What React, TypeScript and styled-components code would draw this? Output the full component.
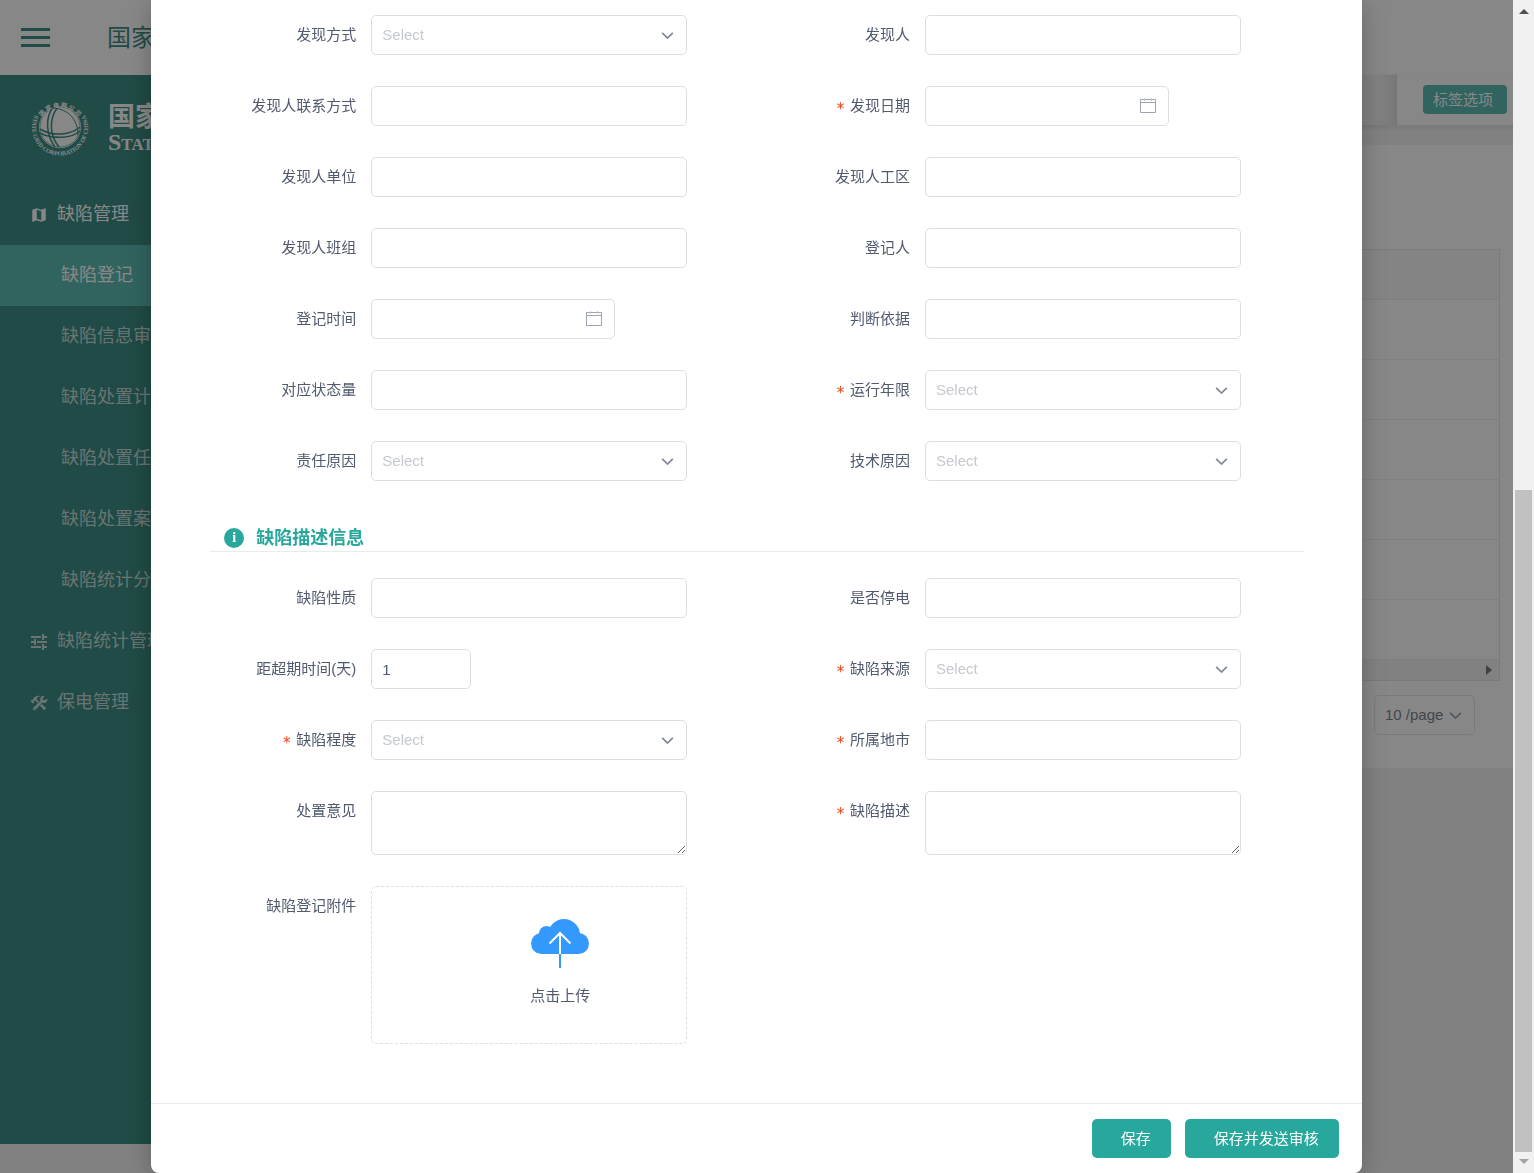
import React, { useId } from "react";
import styled, { createGlobalStyle } from "styled-components";
import { MdMap } from "react-icons/md";
import { IoIosConstruct } from "react-icons/io";

const GlobalStyle = createGlobalStyle`
  *, *::before, *::after { box-sizing: border-box; }
  body {
    margin: 0;
    overflow: hidden;
    background: #f0f0f0;
    color: #515a6e;
    font: 15px/15px "Liberation Sans", "Noto Sans CJK SC", sans-serif;
  }
  button, input, select, textarea { font: inherit; color: inherit; }
  a { color: inherit; text-decoration: none; }
`;

/* ---------- page behind the dialog ---------- */

const Page = styled.div`
  display: flex;
  flex-direction: column;
  height: 100vh;
  padding: 0 21px 29px 0;
  overflow: hidden;
`;

const TopBar = styled.header`
  display: flex;
  align-items: center;
  flex: none;
  gap: 57px;
  height: 75px;
  padding-left: 21px;
  background: #fff;
  color: #00695c;
`;

const MenuToggle = styled.button`
  display: flex;
  flex-direction: column;
  gap: 5px;
  width: 29px;
  padding: 0;
  border: 0;
  background: none;
`;

const ToggleBar = styled.span`
  height: 3px;
  background: #00695c;
`;

const SiteTitle = styled.h1`
  margin: 0;
  font-size: 24px;
  line-height: 32px;
  font-weight: 400;
  white-space: nowrap;
`;

const Workspace = styled.div`
  display: flex;
  flex: 1;
  min-height: 0;
`;

const Sidebar = styled.nav`
  flex: none;
  width: 320px;
  background: #00695c;
`;

const Brand = styled.div`
  display: flex;
  align-items: flex-start;
  gap: 19px;
  height: 109px;
  padding: 23px 0 0 31px;
  color: #fff;
`;

const BrandName = styled.div`
  padding-top: 5px;
  font-family: "Liberation Serif", "Noto Sans CJK SC", serif;
  font-weight: 700;
  white-space: nowrap;
`;

const BrandChinese = styled.div`
  font-size: 27px;
  line-height: 28px;
`;

const BrandEnglish = styled.div`
  font-size: 24px;
  line-height: 22px;
  font-variant: small-caps;
`;

const MenuGroup = styled.a<{ $active?: boolean }>`
  display: flex;
  align-items: center;
  gap: 9px;
  height: 61px;
  padding: 0 0 2px 30px;
  color: ${(p) => (p.$active ? "#fff" : "rgba(255, 255, 255, 0.7)")};
  font-size: 18px;
  line-height: 24px;
  white-space: nowrap;

  & > svg { position: relative; top: 1px; }
`;

const MenuLink = styled.a<{ $active?: boolean }>`
  display: flex;
  align-items: center;
  height: 61px;
  padding: 0 0 2px 61px;
  background: ${(p) => (p.$active ? "#28a89c" : "transparent")};
  color: ${(p) => (p.$active ? "#fff" : "rgba(255, 255, 255, 0.7)")};
  font-size: 18px;
  line-height: 24px;
  white-space: nowrap;
`;

const Main = styled.main`
  display: flex;
  flex-direction: column;
  flex: 1;
  min-width: 0;
`;

const TabStrip = styled.div`
  display: flex;
  height: 50px;
  background: #f0f0f0;
  box-shadow: 0 2px 3px 2px rgba(0, 0, 0, 0.08);
`;

const TabTrack = styled.div`
  flex: 1;
  box-shadow: inset -15px 0 15px -10px rgba(0, 0, 0, 0.15);
`;

const TabActions = styled.div`
  display: flex;
  align-items: center;
  padding: 0 6px 2px 26px;
  background: #fff;
`;

const TabOptions = styled.button`
  height: 29px;
  padding: 0 14px 0 10px;
  border: 0;
  border-radius: 4px;
  background: #28a89c;
  color: #fff;
`;

const Panel = styled.section`
  margin-top: 20px;
  padding: 104px 13px 33px 20px;
  background: #fff;
`;

const Records = styled.table`
  width: 100%;
  border: 1px solid #dcdee2;
  border-collapse: collapse;
`;

const HeadCell = styled.th`
  height: 50px;
  border-bottom: 1px solid #e8eaec;
  background: #f8f8f9;
`;

const Cell = styled.td`
  height: 60px;
  border-bottom: 1px solid #e8eaec;
`;

const TableScroller = styled.div`
  display: flex;
  align-items: center;
  justify-content: flex-end;
  height: 21px;
  padding-right: 7px;
  border: 1px solid #dcdee2;
  border-top: 0;
  background: #f1f1f1;
`;

const Pager = styled.div`
  display: flex;
  justify-content: flex-end;
  padding: 14px 25px 0 0;
`;

/* ---------- overlay and dialog ---------- */

const Overlay = styled.div`
  position: fixed;
  inset: 0;
  display: grid;
  grid-template-columns: 1fr 21px;
  background: rgba(55, 55, 55, 0.6);
`;

const Dialog = styled.form`
  display: flex;
  flex-direction: column;
  justify-self: center;
  width: 80%;
  border-radius: 0 0 8px 8px;
  background: #fff;
  box-shadow: 0 4px 25px rgba(0, 0, 0, 0.25);
`;

const DialogBody = styled.div`
  flex: 1;
  padding: 15px 58px 59px 59px;
`;

const Fields = styled.div`
  display: grid;
  grid-template-columns: 1fr 1fr;
  row-gap: 31px;
  margin: 0 -7px;
`;

const FieldRow = styled.div`
  display: flex;
  align-items: flex-start;
  padding-right: 70px;
`;

const FieldLabel = styled.label<{ $required?: boolean }>`
  flex: none;
  width: 168px;
  padding: 12px 15px 0 0;
  text-align: right;
  white-space: nowrap;

  &::before {
    content: ${(p) => (p.$required ? '"*"' : "none")};
    margin-right: 5px;
    color: #ed4014;
    font-family: "DejaVu Sans Mono", monospace;
    line-height: 0;
    vertical-align: -3px;
  }
`;

const Control = styled.div<{ $width?: string }>`
  display: grid;
  flex: ${(p) => (p.$width ? "none" : "1")};
  width: ${(p) => p.$width ?? "auto"};
  min-width: 0;
  align-items: center;

  & > * { grid-area: 1 / 1; }
  & > svg { justify-self: end; margin-right: 12px; pointer-events: none; }
`;

const TextInput = styled.input`
  width: 100%;
  height: 40px;
  padding: 0 10px;
  border: 1px solid #dcdee2;
  border-radius: 5px;
  background: #fff;
`;

const SelectInput = styled.select<{ $plain?: boolean }>`
  width: 100%;
  height: 40px;
  padding: 0 28px 1px 10px;
  border: 1px solid #dcdee2;
  border-radius: 5px;
  appearance: none;
  background: ${(p) => (p.$plain ? "transparent" : "#fff")};
  color: ${(p) => (p.$plain ? "#515a6e" : "#c5c8ce")};
  line-height: 20px;
`;

const TextArea = styled.textarea`
  display: block;
  width: 100%;
  height: 64px;
  padding: 5px 10px;
  border: 1px solid #dcdee2;
  border-radius: 5px;
  background: #fff;
`;

const SectionTitle = styled.h2`
  display: flex;
  align-items: center;
  gap: 12px;
  height: 28px;
  margin: 43px 0 26px;
  padding-left: 14px;
  border-bottom: 1px solid #e8eaec;
  color: #28a89c;
  font-size: 18px;
  line-height: 26px;
  font-weight: 700;
`;

const InfoBadge = styled.span`
  width: 20px;
  height: 20px;
  border-radius: 50%;
  background: #28a89c;
  color: #fff;
  font: 700 14px/20px "Liberation Serif", serif;
  text-align: center;
`;

const UploadBox = styled.label`
  display: flex;
  flex-direction: column;
  flex: 1;
  align-items: center;
  gap: 20px;
  height: 158px;
  padding: 32px 0 0 62px;
  border: 1px dashed #dcdee2;
  border-radius: 5px;
`;

const FileInput = styled.input`
  display: none;
`;

const DialogFooter = styled.footer`
  display: flex;
  justify-content: flex-end;
  gap: 14px;
  padding: 15px 23px;
  border-top: 1px solid #e8eaec;
`;

const PrimaryButton = styled.button`
  height: 39px;
  padding: 0 20px 0 29px;
  border: 0;
  border-radius: 5px;
  background: #28a89c;
  color: #fff;
`;

const Scrollbar = styled.div`
  display: flex;
  flex-direction: column;
  align-items: center;
  justify-content: space-between;
  padding: 9px 2px;
  background: #f1f1f1;
`;

const Thumb = styled.div`
  width: 17px;
  height: calc(57% + 4px);
  margin: auto 0 6px;
  background: #c1c1c1;
`;

/* ---------- drawings ---------- */

const Chevron = () => (
  <svg width="14" height="8" viewBox="0 0 14 8" fill="none" stroke="#808695" strokeWidth="1.7">
    <path d="M1.2 1.8 6.5 7 11.8 1.8" />
  </svg>
);

const CalendarIcon = () => (
  <svg width="17" height="16" viewBox="0 0 17 16" fill="none" stroke="#9ea3b0">
    <path d="M.5 1.5h15v13H.5zM.5 4.5h15" />
    <path d="M4.500 0v3M11.500 0v3" stroke="#c5c8ce" />
  </svg>
);

const CloudUpload = () => (
  <svg width="58" height="49" viewBox="0 0 58 49">
    <g fill="#3399ff">
      <circle cx="33" cy="16" r="16" />
      <circle cx="15.500" cy="14.500" r="7.500" />
      <rect y="14" width="58" height="21" rx="10.500" />
      <rect x="15" y="10" width="20" height="12" />
      <rect x="28" y="35" width="2" height="14" />
    </g>
    <path d="M29 35V14M18.500 24.500 29 14l10.500 10.500" fill="none" stroke="#fff" strokeWidth="2" />
  </svg>
);

const SlidersIcon = () => (
  <svg width="18" height="18" viewBox="0 0 18 18" fill="currentColor">
    <path d="M1 3h10v2H1zM12 1h2v2h3v2h-3v2h-2zM1 8h3V6h2v6H4v-2H1zM7 8h10v2H7zM1 13h10v2H1zM12 11h2v2h3v2h-3v2h-2z" />
  </svg>
);

const ScrollArrow = ({ d, fill }: { d: string; fill: string }) => (
  <svg width="10" height="6" viewBox="0 0 10 6" fill={fill}>
    <path d={d} />
  </svg>
);

const GlobeLogo = () => (
  <svg width="58" height="58" viewBox="0 0 58 58" fill="#fff" overflow="visible">
    <defs>
      <path id="ring-top" d="M7 27A22.500 22.500 0 0 1 51 27" />
      <path id="ring-bottom" d="M4 17A28 28 0 1 0 54 17" />
    </defs>
    <circle cx="29" cy="29" r="21" />
    <g fill="none" stroke="#00695c" strokeWidth="1.500">
      <circle cx="29" cy="29" r="20" strokeWidth="0.600" />
      <path d="M22 9C14 20 15 37 24 49M27 9C18 20 18 37 28 49" />
      <path d="M9 31C22 39 40 37 49 29M9 35C23 42 41 40 49 33" />
      <path d="M22 10C37 11 47 21 47 37" strokeWidth="1" />
    </g>
    <text fontFamily="Noto Sans CJK SC, sans-serif" fontSize="6" fontWeight="700">
      <textPath href="#ring-top" startOffset="50%" textAnchor="middle">国 家 电 网 公 司</textPath>
    </text>
    <text fontFamily="Liberation Serif, serif" fontSize="6" fontWeight="700">
      <textPath href="#ring-bottom" startOffset="50%" textAnchor="middle">STATE GRID CORPORATION OF CHINA</textPath>
    </text>
  </svg>
);

/* ---------- form fields ---------- */

type Kind = "text" | "select" | "date" | "number" | "textarea" | "upload";
type FieldSpec = { label: string; kind?: Kind; required?: boolean };

const discoveryFields: FieldSpec[] = [
  { label: "发现方式", kind: "select" },
  { label: "发现人" },
  { label: "发现人联系方式" },
  { label: "发现日期", kind: "date", required: true },
  { label: "发现人单位" },
  { label: "发现人工区" },
  { label: "发现人班组" },
  { label: "登记人" },
  { label: "登记时间", kind: "date" },
  { label: "判断依据" },
  { label: "对应状态量" },
  { label: "运行年限", kind: "select", required: true },
  { label: "责任原因", kind: "select" },
  { label: "技术原因", kind: "select" },
];

const descriptionFields: FieldSpec[] = [
  { label: "缺陷性质" },
  { label: "是否停电" },
  { label: "距超期时间(天)", kind: "number" },
  { label: "缺陷来源", kind: "select", required: true },
  { label: "缺陷程度", kind: "select", required: true },
  { label: "所属地市", required: true },
  { label: "处置意见", kind: "textarea" },
  { label: "缺陷描述", kind: "textarea", required: true },
  { label: "缺陷登记附件", kind: "upload" },
];

const renderControl = (kind: Kind, id: string) => {
  switch (kind) {
    case "select":
      return (
        <Control>
          <SelectInput id={id}>
            <option>Select</option>
          </SelectInput>
          <Chevron />
        </Control>
      );
    case "date":
      return (
        <Control $width="244px">
          <TextInput id={id} type="text" />
          <CalendarIcon />
        </Control>
      );
    case "number":
      return (
        <Control $width="100px">
          <TextInput id={id} type="text" inputMode="numeric" defaultValue="1" />
        </Control>
      );
    case "textarea":
      return (
        <Control>
          <TextArea id={id} />
        </Control>
      );
    case "upload":
      return (
        <UploadBox>
          <FileInput id={id} type="file" />
          <CloudUpload />
          点击上传
        </UploadBox>
      );
    default:
      return (
        <Control>
          <TextInput id={id} type="text" />
        </Control>
      );
  }
};

const Field = ({ label, kind = "text", required }: FieldSpec) => {
  const id = useId();
  return (
    <FieldRow>
      <FieldLabel htmlFor={id} $required={required}>{label}</FieldLabel>
      {renderControl(kind, id)}
    </FieldRow>
  );
};

const defectLinks = ["缺陷登记", "缺陷信息审核", "缺陷处置计划", "缺陷处置任务", "缺陷处置案例", "缺陷统计分析"];

export default function App() {
  return (
    <>
      <GlobalStyle />
      <Page>
        <TopBar>
          <MenuToggle type="button" aria-label="菜单">
            <ToggleBar />
            <ToggleBar />
            <ToggleBar />
          </MenuToggle>
          <SiteTitle>国家电网</SiteTitle>
        </TopBar>
        <Workspace>
          <Sidebar>
            <Brand>
              <GlobeLogo />
              <BrandName>
                <BrandChinese>国家电网</BrandChinese>
                <BrandEnglish>State Grid</BrandEnglish>
              </BrandName>
            </Brand>
            <MenuGroup href="#" $active>
              <MdMap size={18} />
              缺陷管理
            </MenuGroup>
            {defectLinks.map((text, i) => (
              <MenuLink key={text} href="#" $active={i === 0}>{text}</MenuLink>
            ))}
            <MenuGroup href="#">
              <SlidersIcon />
              缺陷统计管理
            </MenuGroup>
            <MenuGroup href="#">
              <IoIosConstruct size={18} />
              保电管理
            </MenuGroup>
          </Sidebar>
          <Main>
            <TabStrip>
              <TabTrack />
              <TabActions>
                <TabOptions type="button">标签选项</TabOptions>
              </TabActions>
            </TabStrip>
            <Panel>
              <Records>
                <thead>
                  <tr><HeadCell /></tr>
                </thead>
                <tbody>
                  {[1, 2, 3, 4, 5, 6].map((row) => (
                    <tr key={row}><Cell /></tr>
                  ))}
                </tbody>
              </Records>
              <TableScroller>
                <svg width="6" height="10" viewBox="0 0 6 10" fill="#505050">
                  <path d="M0 0 6 5 0 10z" />
                </svg>
              </TableScroller>
              <Pager>
                <Control $width="101px">
                  <SelectInput $plain aria-label="每页条数">
                    <option>10 /page</option>
                  </SelectInput>
                  <Chevron />
                </Control>
              </Pager>
            </Panel>
          </Main>
        </Workspace>
      </Page>

      <Overlay>
        <Dialog>
          <DialogBody>
            <Fields>
              {discoveryFields.map((f) => <Field key={f.label} {...f} />)}
            </Fields>
            <SectionTitle>
              <InfoBadge>i</InfoBadge>
              缺陷描述信息
            </SectionTitle>
            <Fields>
              {descriptionFields.map((f) => <Field key={f.label} {...f} />)}
            </Fields>
          </DialogBody>
          <DialogFooter>
            <PrimaryButton type="button">保存</PrimaryButton>
            <PrimaryButton type="button">保存并发送审核</PrimaryButton>
          </DialogFooter>
        </Dialog>
        <Scrollbar>
          <ScrollArrow d="M0 5 5 0l5 5z" fill="#505050" />
          <Thumb />
          <ScrollArrow d="M0 1h10L5 6z" fill="#a3a3a3" />
        </Scrollbar>
      </Overlay>
    </>
  );
}
